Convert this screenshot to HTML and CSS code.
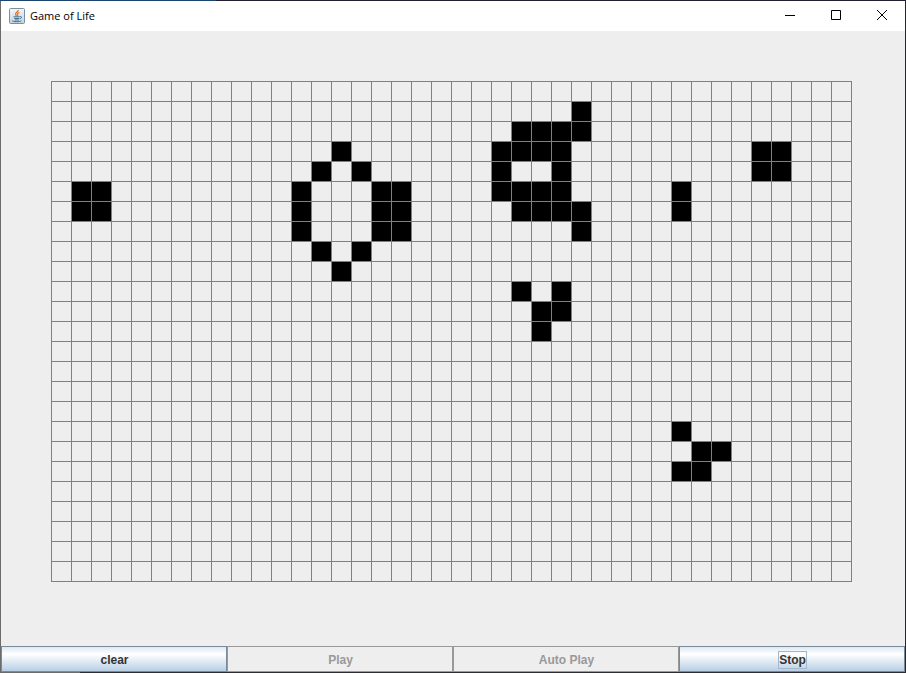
FILE: index.html
```
<!DOCTYPE html>
<html lang="en">
<head>
<meta charset="utf-8">
<title>Game of Life</title>
<link rel="stylesheet" href="styles.css">
</head>
<body>
<div class="window">
  <header class="titlebar">
    <svg class="app-icon" width="16" height="16" viewBox="0 0 16 16" aria-hidden="true">
      <defs>
        <linearGradient id="tile" x1="0" y1="0" x2="0" y2="1">
          <stop offset="0" stop-color="#f4f6f8"/>
          <stop offset="1" stop-color="#c3d3df"/>
        </linearGradient>
      </defs>
      <rect x="0.5" y="0.5" width="15" height="15" rx="1" fill="url(#tile)" stroke="#7890a2"/>
      <path d="M9.3 1.8C9.6 3.6 6.2 4.4 6.5 6.2C6.6 7 7.3 7.4 7.4 8.2M10.3 4.3C8.6 5 8 5.8 8.6 6.6C9 7.2 8.9 7.6 8.4 8.1" fill="none" stroke="#e8742c" stroke-width="1.3"/>
      <path d="M4.5 8.8H10.8M5.3 10.5H10.3M5.8 12H9.8M11 8.6C13.2 8.1 13 10.3 10.9 10.9M3.2 12.7C4 14 10.7 13.9 12.3 12.9" fill="none" stroke="#41708f" stroke-width="1"/>
    </svg>
    <h1 class="title">Game of Life</h1>
    <button class="caption" type="button" aria-label="Minimize">
      <svg width="12" height="12" viewBox="0 0 12 12"><path d="M1 6.5H11"/></svg>
    </button>
    <button class="caption" type="button" aria-label="Maximize">
      <svg width="12" height="12" viewBox="0 0 12 12"><path d="M1.5 1.5H10.5V10.5H1.5Z"/></svg>
    </button>
    <button class="caption" type="button" aria-label="Close">
      <svg width="12" height="12" viewBox="0 0 12 12"><path d="M1 1L11 11M11 1L1 11"/></svg>
    </button>
  </header>
  <main class="field">
    <div class="board" id="board"></div>
  </main>
  <footer class="controls">
    <button class="control" type="button">clear</button>
    <button class="control" type="button" disabled>Play</button>
    <button class="control" type="button" disabled>Auto Play</button>
    <button class="control" type="button"><span class="focus">Stop</span></button>
  </footer>
</div>
<script src="life.js"></script>
</body>
</html>
```
FILE: styles.css
```
* {
  box-sizing: border-box;
}

body {
  margin: 0;
  font-family: "Liberation Sans", Arial, sans-serif;
  font-size: 12px;
}

.window {
  display: flex;
  flex-direction: column;
  min-height: 100vh;
  padding: 1px;
  background:
    linear-gradient(90deg, #1c4470 216px, #221f30 216px) top / 100% 1px no-repeat,
    linear-gradient(90deg, #6b6b6b 80px, #2b2d33 80px) bottom / 100% 1px no-repeat,
    linear-gradient(#6b6b6b, #6b6b6b) left / 1px 100% no-repeat,
    linear-gradient(#25272b, #25272b) right / 1px 100% no-repeat,
    #eeeeee;
}

.titlebar {
  display: flex;
  align-items: center;
  height: 30px;
  padding-left: 8px;
  background: #ffffff;
}

.app-icon {
  flex: none;
}

.title {
  flex: 1;
  margin: 0 0 0 5px;
  font: 11px/16px "Open Sans", "Noto Sans", sans-serif;
  color: #000000;
}

.caption {
  display: flex;
  align-items: center;
  justify-content: center;
  width: 46px;
  height: 30px;
  padding: 0 0 2px;
  border: 0;
  background: transparent;
}

.caption svg {
  fill: none;
  stroke: #000000;
}

.field {
  flex: 1;
  padding: 50px;
}

.board {
  display: grid;
  grid-template-columns: repeat(40, 19px);
  grid-auto-rows: 19px;
  gap: 1px;
  width: max-content;
  padding: 1px;
  background: #808080;
}

.cell {
  background: #eeeeee;
}

.alive {
  background: #000000;
}

.controls {
  display: grid;
  grid-template-columns: repeat(4, 1fr);
}

.control {
  height: 26px;
  padding: 2px 0 0 1px;
  border: 1px solid #7a8a99;
  background: linear-gradient(#dde8f3, #ffffff 30%, #b8cfe5);
  font: bold 12px/16px "Liberation Sans", Arial, sans-serif;
  color: #333333;
}

.control:disabled {
  border-color: #999999;
  background: #eeeeee;
  color: #999999;
}

.focus {
  display: inline-block;
  outline: 1px solid #a3b8cc;
}
```
FILE: life.js
```
const COLUMNS = 40;
const ROWS = 25;

// Live columns, keyed by row.
const live = {
  1: [26],
  2: [23, 24, 25, 26],
  3: [14, 22, 23, 24, 25, 35, 36],
  4: [13, 15, 22, 25, 35, 36],
  5: [1, 2, 12, 16, 17, 22, 23, 24, 25, 31],
  6: [1, 2, 12, 16, 17, 23, 24, 25, 26, 31],
  7: [12, 16, 17, 26],
  8: [13, 15],
  9: [14],
  10: [23, 25],
  11: [24, 25],
  12: [24],
  17: [31],
  18: [32, 33],
  19: [31, 32]
};

const board = document.getElementById("board");
for (let row = 0; row < ROWS; row++) {
  for (let column = 0; column < COLUMNS; column++) {
    const cell = document.createElement("div");
    const alive = (live[row] || []).includes(column);
    cell.className = alive ? "cell alive" : "cell";
    board.append(cell);
  }
}
```
